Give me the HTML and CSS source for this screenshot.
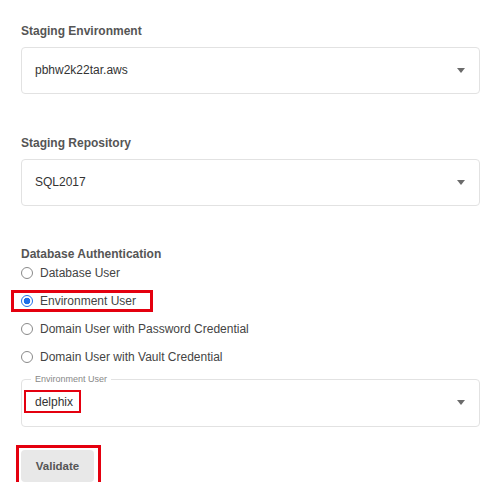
FILE: index.html
```html
<!DOCTYPE html>
<html lang="en">
<head>
<meta charset="UTF-8" />
<meta name="viewport" content="width=device-width, initial-scale=1" />
<title>Staging settings</title>
<link rel="stylesheet" href="styles.css">
</head>
<body>
<form class="form">
  <div class="field">
    <div class="field-label">Staging Environment</div>
    <div class="select">
      <span class="select-value">pbhw2k22tar.aws</span>
      <span class="caret"></span>
    </div>
  </div>

  <div class="field">
    <div class="field-label">Staging Repository</div>
    <div class="select">
      <span class="select-value">SQL2017</span>
      <span class="caret"></span>
    </div>
  </div>

  <div class="field auth">
    <div class="field-label">Database Authentication</div>
    <div class="radio-row"><span class="radio"></span>Database User</div>
    <div class="radio-row"><span class="mark mark-radio"><span class="radio checked"></span>Environment User</span></div>
    <div class="radio-row"><span class="radio"></span>Domain User with Password Credential</div>
    <div class="radio-row"><span class="radio"></span>Domain User with Vault Credential</div>

    <fieldset class="outlined">
      <legend>Environment User</legend>
      <div class="outlined-row">
        <span class="mark mark-user">delphix</span>
        <span class="caret"></span>
      </div>
    </fieldset>
  </div>

  <div class="actions">
    <span class="mark mark-btn"><button type="button" class="btn">Validate</button></span>
  </div>
</form>
</body>
</html>
```

FILE: styles.css
```css
body {
  margin: 0;
  padding: 24px 16px 0 21px;
  background: #fff;
  font-family: "Liberation Sans", Arial, sans-serif;
  font-size: 12px;
  color: #333;
}
.field-label {
  font-weight: bold;
  font-size: 12px;
  line-height: 15px;
  color: #555;
  margin-bottom: 8px;
}
.field + .field {
  margin-top: 42px;
}
.field.auth {
  margin-top: 41px;
}
.auth .field-label {
  margin-bottom: 0;
}
.select {
  height: 47px;
  box-sizing: border-box;
  border: 1px solid #e2e2e2;
  border-radius: 4px;
  padding: 0 14px 0 13px;
  display: flex;
  align-items: center;
  justify-content: space-between;
}
.select-value {
  line-height: 15px;
  color: #333;
}
.caret {
  width: 0;
  height: 0;
  border-left: 4.5px solid transparent;
  border-right: 4.5px solid transparent;
  border-top: 5px solid #6b6b6b;
}
.radio-row {
  display: flex;
  align-items: center;
  height: 22px;
  margin-top: 6px;
  color: #444;
  line-height: 15px;
}
.auth .field-label + .radio-row {
  margin-top: 0;
}
.radio {
  width: 12px;
  height: 12px;
  box-sizing: border-box;
  border: 1px solid #8a8a8a;
  border-radius: 50%;
  background: #fff;
  margin-right: 7px;
  flex-shrink: 0;
}
.radio.checked {
  border-color: #1f6fe8;
  background: radial-gradient(circle, #1f6fe8 0 3px, #fff 3.6px 100%);
}
.mark {
  position: relative;
  display: inline-flex;
  align-items: center;
}
.mark::after {
  content: "";
  position: absolute;
  border: 3px solid #e4000f;
  pointer-events: none;
}
.mark-radio::after {
  top: -4px;
  bottom: -3px;
  left: -10px;
  right: -17px;
}
.mark-user::after {
  top: -5px;
  bottom: -3px;
  left: -11px;
  right: -8px;
  border-width: 2.5px;
}
.mark-btn::after {
  top: -5px;
  bottom: -3px;
  left: -5px;
  right: -7px;
}
.outlined {
  margin: 6px 0 0;
  padding: 0 14px 6px 13px;
  border: 1px solid #e2e2e2;
  border-radius: 4px;
}
.outlined legend {
  font-size: 9px;
  line-height: 11px;
  color: #888;
  padding: 0 4px;
  margin-left: -4px;
}
.outlined-row {
  height: 35px;
  display: flex;
  align-items: center;
  justify-content: space-between;
  line-height: 15px;
  color: #333;
}
.actions {
  margin-top: 23px;
}
.btn {
  width: 73px;
  height: 32px;
  border: none;
  border-radius: 4px;
  background: #e8e8e8;
  font-family: "Liberation Sans", Arial, sans-serif;
  font-weight: bold;
  font-size: 11.5px;
  color: #555;
  padding: 0;
  cursor: pointer;
}
```
